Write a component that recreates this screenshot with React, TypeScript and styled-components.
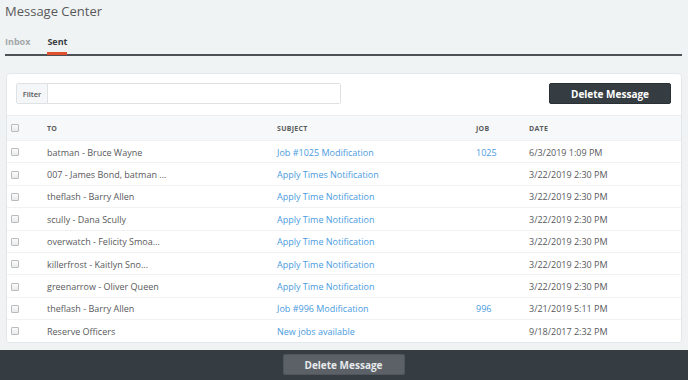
import React from "react";
import styled, { createGlobalStyle } from "styled-components";

const Global = createGlobalStyle`
  html, body { margin: 0; padding: 0; background: #f0f3f4; }
  body { font-family: "Open Sans", "Liberation Sans", sans-serif; color: #58595b; }
  * { box-sizing: border-box; }
`;

const Page = styled.div`
  width: 688px;
  height: 380px;
  display: flex;
  flex-direction: column;
  overflow: hidden;
`;

const Main = styled.div`
  padding: 2px 6px 0 5px;
  flex: 1;
  display: flex;
  flex-direction: column;
`;

const Title = styled.h1`
  margin: 0;
  font-size: 13px;
  font-weight: 400;
  color: #58595b;
  line-height: 18px;
`;

const Tabs = styled.div`
  display: flex;
  gap: 17px;
  margin-top: 14px;
  border-bottom: 2px solid #4d5256;
  height: 22px;
`;

const Tab = styled.div<{ $active?: boolean }>`
  font-size: 9px;
  font-weight: 700;
  color: ${(p) => (p.$active ? "#3a3f44" : "#a3a6a9")};
  position: relative;
  line-height: 14px;
  padding-top: 1px;
  &::after {
    content: "";
    display: ${(p) => (p.$active ? "block" : "none")};
    position: absolute;
    left: 0;
    right: 0;
    bottom: -1px;
    height: 3px;
    background: #e2502b;
  }
`;

const Card = styled.div`
  margin: 17px 0 0 1px;
  background: #fff;
  border: 1px solid #e4e7e9;
  border-radius: 4px;
  overflow: hidden;
`;

const Toolbar = styled.div`
  display: flex;
  justify-content: space-between;
  align-items: center;
  padding: 9px 10px 11px 9px;
  height: 41px;
`;

const FilterGroup = styled.div`
  display: flex;
  width: 325px;
  height: 21px;
  border: 1px solid #dfe2e5;
  border-radius: 2px;
`;

const FilterLabel = styled.div`
  width: 31px;
  background: #f5f6f7;
  border-right: 1px solid #dfe2e5;
  font-size: 7.5px;
  font-weight: 600;
  color: #58595b;
  display: flex;
  align-items: center;
  justify-content: center;
`;

const FilterInput = styled.input`
  flex: 1;
  border: none;
  outline: none;
  background: #fff;
`;

const DarkButton = styled.button`
  width: 122px;
  height: 21px;
  background: #353d42;
  color: #fff;
  border: 1px solid #2a3135;
  border-radius: 2px;
  font-family: inherit;
  font-size: 10px;
  font-weight: 700;
  padding: 0;
  cursor: pointer;
`;

const Row = styled.div<{ $head?: boolean }>`
  display: grid;
  grid-template-columns: 40px 230px 199px 53px 1fr;
  align-items: center;
  height: ${(p) => (p.$head ? "25px" : "22.4px")};
  padding-top: ${(p) => (p.$head ? "0" : "1px")};
  border-top: 1px solid ${(p) => (p.$head ? "#eceef0" : "#eff1f2")};
  background: ${(p) => (p.$head ? "#f7f8f9" : "#fff")};
  font-size: ${(p) => (p.$head ? "7px" : "9px")};
  font-weight: ${(p) => (p.$head ? 700 : 400)};
  color: ${(p) => (p.$head ? "#5a5d60" : "#58595b")};
  letter-spacing: ${(p) => (p.$head ? "0.3px" : "0")};
  white-space: nowrap;
`;

const Box = styled.span`
  display: block;
  width: 8px;
  height: 8px;
  margin-left: 4px;
  border: 1px solid #b9bcbf;
  border-radius: 1px;
  background: linear-gradient(#fbfbfb, #e9eaeb);
`;

const Link = styled.span`
  color: #4a9be0;
`;

const Footer = styled.div`
  height: 31px;
  margin-top: 7px;
  background: #353d42;
  display: flex;
  justify-content: center;
  align-items: center;
`;

const FooterButton = styled(DarkButton)`
  background: #5b6167;
  border-color: #50565c;
  color: #e8eaec;
  margin-left: -1px;
`;

const rows = [
  ["batman - Bruce Wayne", "Job #1025 Modification", "1025", "6/3/2019 1:09 PM"],
  ["007 - James Bond, batman ...", "Apply Times Notification", "", "3/22/2019 2:30 PM"],
  ["theflash - Barry Allen", "Apply Time Notification", "", "3/22/2019 2:30 PM"],
  ["scully - Dana Scully", "Apply Time Notification", "", "3/22/2019 2:30 PM"],
  ["overwatch - Felicity Smoa...", "Apply Time Notification", "", "3/22/2019 2:30 PM"],
  ["killerfrost - Kaitlyn Sno...", "Apply Time Notification", "", "3/22/2019 2:30 PM"],
  ["greenarrow - Oliver Queen", "Apply Time Notification", "", "3/22/2019 2:30 PM"],
  ["theflash - Barry Allen", "Job #996 Modification", "996", "3/21/2019 5:11 PM"],
  ["Reserve Officers", "New jobs available", "", "9/18/2017 2:32 PM"],
];

export default function App() {
  return (
    <Page>
      <Global />
      <Main>
        <Title>Message Center</Title>
        <Tabs>
          <Tab>Inbox</Tab>
          <Tab $active>Sent</Tab>
        </Tabs>
        <Card>
          <Toolbar>
            <FilterGroup>
              <FilterLabel>Filter</FilterLabel>
              <FilterInput />
            </FilterGroup>
            <DarkButton>Delete Message</DarkButton>
          </Toolbar>
          <Row $head>
            <Box />
            <span>TO</span>
            <span>SUBJECT</span>
            <span>JOB</span>
            <span>DATE</span>
          </Row>
          {rows.map((r, i) => (
            <Row key={i}>
              <Box />
              <span>{r[0]}</span>
              <Link>{r[1]}</Link>
              <Link>{r[2]}</Link>
              <span>{r[3]}</span>
            </Row>
          ))}
        </Card>
      </Main>
      <Footer>
        <FooterButton>Delete Message</FooterButton>
      </Footer>
    </Page>
  );
}
